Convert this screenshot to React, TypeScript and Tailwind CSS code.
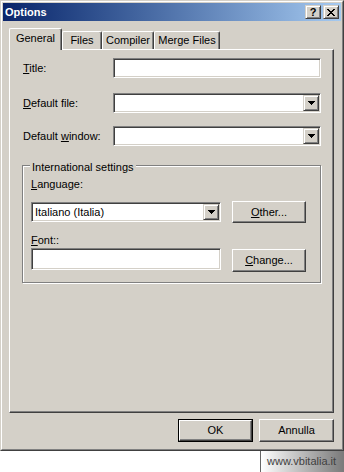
import React from 'react';

const raised =
  'border border-t-white border-l-white border-r-[#404040] border-b-[#404040] shadow-[inset_-1px_-1px_#808080]';
const sunken =
  'border border-t-[#808080] border-l-[#808080] border-r-white border-b-white shadow-[inset_1px_1px_#404040,inset_-1px_-1px_#d4d0c8] p-px bg-white';
const dropBtn =
  'border border-t-[#d4d0c8] border-l-[#d4d0c8] border-r-[#404040] border-b-[#404040] shadow-[inset_1px_1px_white,inset_-1px_-1px_#808080] bg-[#d4d0c8]';

const Arrow: React.FC = () => (
  <svg width="7" height="4" viewBox="0 0 7 4" shapeRendering="crispEdges">
    <rect x="0" y="0" width="7" height="1" fill="#000" />
    <rect x="1" y="1" width="5" height="1" fill="#000" />
    <rect x="2" y="2" width="3" height="1" fill="#000" />
    <rect x="3" y="3" width="1" height="1" fill="#000" />
  </svg>
);

const Combo: React.FC<{ className: string; value?: string }> = ({ className, value }) => (
  <div className={`${sunken} ${className} flex`}>
    <div className="flex-1 flex items-center pl-[2px] truncate">{value}</div>
    <div className={`${dropBtn} w-[16px] h-full flex items-center justify-center`}>
      <Arrow />
    </div>
  </div>
);

const Button: React.FC<{ className: string; children: React.ReactNode }> = ({ className, children }) => (
  <div className={`${raised} ${className} bg-[#d4d0c8] flex items-center justify-center`}>{children}</div>
);

const tabs = [
  { label: 'General', w: 'w-[53px]', active: true },
  { label: 'Files', w: 'w-[40px]', active: false },
  { label: 'Compiler', w: 'w-[52px]', active: false },
  { label: 'Merge Files', w: 'w-[66px]', active: false },
];

export default function App() {
  return (
    <div className="w-[344px] h-[472px] bg-white font-['Liberation_Sans',Arial,sans-serif] text-[11px] leading-[13px] text-black">
      <div className="h-[451px] border border-t-[#d4d0c8] border-l-[#d4d0c8] border-r-[#404040] border-b-[#404040]">
        <div className="h-full border border-t-white border-l-white border-r-[#808080] border-b-[#808080] bg-[#d4d0c8] p-px flex flex-col">
          {/* title bar */}
          <div className="h-[18px] flex items-center bg-linear-to-r from-[#0a246a] to-[#a6caf0] pl-[2px] pr-[2px]">
            <span className="flex-1 text-white font-bold">Options</span>
            <div className={`${dropBtn} w-[16px] h-[14px] flex items-center justify-center font-bold text-[11px] leading-none`}>?</div>
            <div className={`${dropBtn} w-[16px] h-[14px] ml-[2px] flex items-center justify-center`}>
              <svg width="8" height="7" viewBox="0 0 8 7" shapeRendering="crispEdges">
                <path d="M0 0h2v1H0zM6 0h2v1H6zM1 1h2v1H1zM5 1h2v1H5zM2 2h4v1H2zM3 3h2v1H3zM2 4h4v1H2zM1 5h2v1H1zM5 5h2v1H5zM0 6h2v1H0zM6 6h2v1H6z" fill="#000" />
              </svg>
            </div>
          </div>

          <div className="flex-1 flex flex-col pt-[7px] pl-[6px] pr-[7px]">
            {/* tabs */}
            <div className="h-[21px] flex items-end relative z-10">
              {tabs.map((t) => (
                <div
                  key={t.label}
                  className={`${t.w} border-t border-l border-r border-t-white border-l-white border-r-[#404040] shadow-[inset_-1px_0_#808080] rounded-tl-[2px] rounded-tr-[2px] bg-[#d4d0c8] flex items-center justify-center ${
                    t.active ? 'h-[22px] -mb-px pb-[2px]' : 'h-[18px]'
                  }`}
                >
                  {t.label}
                </div>
              ))}
            </div>

            {/* panel */}
            <div className={`${raised} h-[364px] flex flex-col pl-[13px] pt-[8px]`}>
              <div className="flex items-center h-[20px]">
                <span className="w-[90px]"><span className="underline">T</span>itle:</span>
                <div className={`${sunken} w-[208px] h-[20px]`} />
              </div>
              <div className="flex items-center h-[20px] mt-[15px]">
                <span className="w-[90px]"><span className="underline">D</span>efault file:</span>
                <Combo className="w-[208px] h-[20px]" />
              </div>
              <div className="flex items-center h-[20px] mt-[13px]">
                <span className="w-[90px]">Default <span className="underline">w</span>indow:</span>
                <Combo className="w-[208px] h-[20px]" />
              </div>

              {/* group box */}
              <div className="relative w-[299px] h-[118px] -ml-px mt-[19px] border border-[#808080] shadow-[inset_1px_1px_white,1px_1px_0_white] flex flex-col pl-[8px]">
                <span className="absolute left-[7px] -top-[5px] px-[2px] bg-[#d4d0c8]">International settings</span>
                <span className="mt-[12px]"><span className="underline">L</span>anguage:</span>
                <div className="flex items-center mt-[10px] h-[22px]">
                  <Combo className="w-[190px] h-[20px]" value="Italiano (Italia)" />
                  <Button className="w-[74px] h-[22px] ml-[11px]">
                    <span><span className="underline">O</span>ther...</span>
                  </Button>
                </div>
                <span className="mt-[11px]"><span className="underline">F</span>ont::</span>
                <div className="flex items-start mt-px">
                  <div className={`${sunken} w-[190px] h-[22px]`} />
                  <Button className="w-[74px] h-[23px] ml-[11px] mt-px">
                    <span><span className="underline">C</span>hange...</span>
                  </Button>
                </div>
              </div>
            </div>

            {/* dialog buttons */}
            <div className="mt-[6px] flex justify-end gap-[6px]">
              <div className="w-[75px] h-[23px] border border-black">
                <Button className="w-full h-full">OK</Button>
              </div>
              <Button className="w-[75px] h-[23px]">Annulla</Button>
            </div>
          </div>
        </div>
      </div>

      {/* watermark */}
      <div className="flex justify-end">
        <div className="w-[84px] h-[21px] border-l border-[#666666] bg-linear-to-r from-white to-[#7a7a7a] flex items-center pl-[6px] text-[#404040]">
          www.vbitalia.it
        </div>
      </div>
    </div>
  );
}
